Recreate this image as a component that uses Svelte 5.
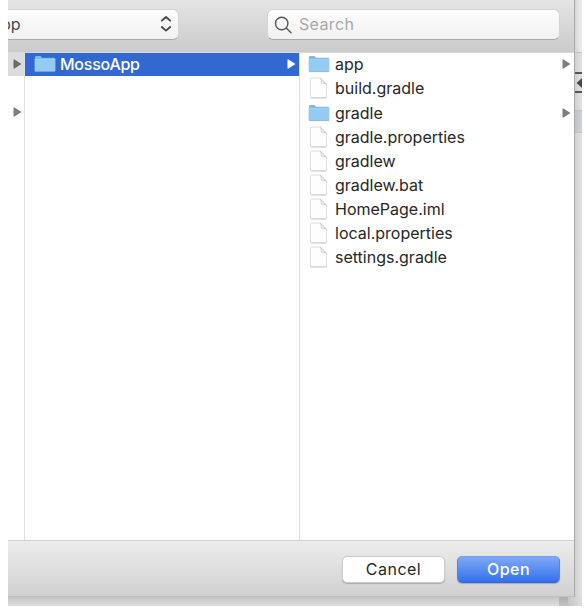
<script>
  const files = [
    { name: 'app', folder: true },
    { name: 'build.gradle' },
    { name: 'gradle', folder: true },
    { name: 'gradle.properties' },
    { name: 'gradlew' },
    { name: 'gradlew.bat' },
    { name: 'HomePage.iml' },
    { name: 'local.properties' },
    { name: 'settings.gradle' }
  ];
</script>

{#snippet folderIcon()}
  <svg class="icon" width="22" height="18" viewBox="0 0 22 18">
    <path d="M1 2.2Q1 1 2.2 1H6.3Q7 1 7.5 2L8 2.7H20Q21 2.7 21 3.7V16H1Z" fill="#7dbbe4" />
    <path d="M.6 4.2H21.4V15.8Q21.4 16.6 20.6 16.6H1.4Q.6 16.6 .6 15.8Z" fill="#94cbf2" />
    <path d="M.6 4.4H21.4" stroke="#a9d7f5" stroke-width=".7" />
    <path d="M1 16.6H21" stroke="#79add0" stroke-width=".8" />
  </svg>
{/snippet}

{#snippet fileIcon()}
  <svg class="icon" width="22" height="22" viewBox="0 0 22 22">
    <path d="M3 1H12.3L18.5 7.2V20.4Q18.5 20.8 18.1 20.8H3Q2.5 20.8 2.5 20.3V1.5Q2.5 1 3 1Z" fill="#fefefe" stroke="#dadada" stroke-width=".9" />
    <path d="M12.3 1.2Q14 3.6 13.3 6.2Q16 5.8 18.3 7.2Z" fill="#f4f4f4" stroke="#c6c6c6" stroke-width=".8" />
    <path d="M2.8 20.9H18.3" stroke="#c4c4c4" stroke-width=".8" />
  </svg>
{/snippet}

{#snippet arrow()}
  <svg class="arrow" width="9" height="10" viewBox="0 0 9 10"><path d="M.5 .6H1.5L8.5 5L1.5 9.4H.5Z" fill="currentColor" /></svg>
{/snippet}

<div class="screen">
  <div class="upper">
    <div class="dialog">
      <header>
        <div class="popup">
          <span>pp</span>
          <svg width="12" height="18" viewBox="0 0 12 18" fill="none" stroke="#484848" stroke-width="1.9" stroke-linecap="round" stroke-linejoin="round"><path d="M1.8 5.6L6 2L10.2 5.6M1.8 12L6 15.6L10.2 12" /></svg>
        </div>
        <div class="search">
          <svg width="19" height="19" viewBox="0 0 19 19" fill="none" stroke="#555" stroke-width="1.4" stroke-linecap="round"><circle cx="7.7" cy="7.5" r="6.2" /><path d="M12.2 12L17 16.7" /></svg>
          <span>Search</span>
        </div>
      </header>
      <main>
        <div class="parent">
          <div class="row active">{@render arrow()}</div>
          <div class="row"></div>
          <div class="row">{@render arrow()}</div>
        </div>
        <div class="middle">
          <div class="row selected">{@render folderIcon()}<span class="name">MossoApp</span>{@render arrow()}</div>
        </div>
        <div class="files">
          {#each files as file}
            <div class="row">
              {#if file.folder}{@render folderIcon()}{:else}{@render fileIcon()}{/if}
              <span class="name">{file.name}</span>
              {#if file.folder}{@render arrow()}{/if}
            </div>
          {/each}
        </div>
      </main>
      <footer>
        <button class="cancel">Cancel</button>
        <button class="open">Open</button>
      </footer>
    </div>
    <aside>
      <div class="side-top"></div>
      <div class="side-tool"><svg width="6" height="10" viewBox="0 0 6 10"><path d="M6 0V10L.6 5Z" fill="#484848" /></svg></div>
      <div class="side-gap"></div>
      <div class="side-band"></div>
    </aside>
  </div>
  <div class="under"><div class="stripe"></div><div class="edge"></div></div>
</div>

<style>
  :global(body) { background: #fff; }
  .screen { width: 574px; height: 606px; margin-left: 8px; overflow: hidden; font-family: Inter, "Liberation Sans", sans-serif; font-size: 16px; color: #272727; }
  .upper { display: flex; height: 597px; }
  .dialog { width: 567px; height: 597px; display: flex; flex-direction: column; box-sizing: border-box; border-right: 1px solid #a9a9a9; }
  header { box-sizing: border-box; height: 53px; flex: none; padding-top: 9px; display: flex; background: linear-gradient(#e5e5e5, #cbcbcb); border-bottom: 1px solid #dadada; }
  .popup, .search { box-sizing: border-box; height: 31px; background: linear-gradient(#fdfdfd, #f1f1f1); border: 1px solid #d3d3d3; border-bottom-color: #aaa; display: flex; align-items: center; padding-bottom: 1px; }
  .popup { width: 171px; border-left: 0; border-radius: 0 6px 6px 0; justify-content: space-between; padding-right: 6px; color: #4b4b4b; }
  .popup span { margin-left: -7px; }
  .search { width: 293px; margin-left: 88px; border-radius: 6px; padding-left: 6px; color: #a8a8a8; }
  .search svg { position: relative; top: 1px; }
  .search span { margin-left: 6px; letter-spacing: .35px; }
  main { height: 487px; flex: none; display: flex; background: #fff; }
  .parent { width: 17px; border-right: 1px solid #dfdfdf; flex: none; box-sizing: border-box; }
  .middle { width: 275px; border-right: 1px solid #dfdfdf; flex: none; box-sizing: border-box; }
  .files { flex: 1; margin-top: -.7px; }
  .row { height: 24.12px; box-sizing: border-box; display: flex; align-items: center; color: #7d7d7d; }
  .parent .row { padding-left: 5px; }
  .parent .active { height: 23px; padding-bottom: 1px; background: #dcdcdc; color: #6b6b6b; }
  .icon { flex: none; }
  .name { margin-left: 5px; color: #272727; white-space: nowrap; line-height: 22px; }
  .middle .row { padding-left: 8.5px; }
  .row.selected { height: 23px; padding-bottom: 1px; background: #3268d1; color: #fff; }
  .selected .name { color: #fff; font-weight: 500; letter-spacing: -.25px; margin-left: 4.5px; }
  .files .row { padding-left: 8px; }
  .row .name + .arrow { margin-left: auto; margin-right: 3px; }
  footer { box-sizing: border-box; height: 57px; flex: none; display: flex; justify-content: flex-end; gap: 12px; padding: 15px 14px 0 0; background: linear-gradient(#ececec, #d1d1d1); border-top: 1px solid #d1d1d1; border-bottom: 1px solid #c0c0c0; }
  button { height: 27px; width: 103px; padding: 0 0 1px; border: 1px solid #ccc; border-radius: 5px; font: inherit; box-sizing: border-box; box-shadow: 0 1px 1px #aaa; }
  .cancel { background: #fff; color: #272727; letter-spacing: .5px; }
  .open { background: linear-gradient(#80a9f2, #3270ef); border-color: #779fed #5484e7 #3168dc; color: #fff; font-weight: 500; letter-spacing: .45px; }
  aside { width: 7px; background: linear-gradient(90deg, #d0d0d1, #e2e2e4); }
  .side-top { height: 52px; background: linear-gradient(90deg, #d5d5d5, #eee); border-bottom: 1px solid #c4c4c4; }
  .side-tool { margin-top: 19px; height: 21px; box-sizing: border-box; border-top: 2px solid #55555b; border-bottom: 2px solid #55555b; display: flex; align-items: center; justify-content: flex-end; }
  .side-gap { height: 17px; border-bottom: 1px solid #bebfc2; }
  .side-band { height: 21px; background: linear-gradient(90deg, #bfc1c5, #d0d2d7); border-bottom: 1px solid #c1c2c4; }
  .under { height: 9px; background: linear-gradient(#c4c4c4, #dedede); display: flex; }
  .stripe { margin-left: 551px; width: 9px; background: linear-gradient(#adadad, #c4c4c4); }
  .edge { flex: 1; background: linear-gradient(90deg, #c6c6c7, #dddddf); }
</style>
